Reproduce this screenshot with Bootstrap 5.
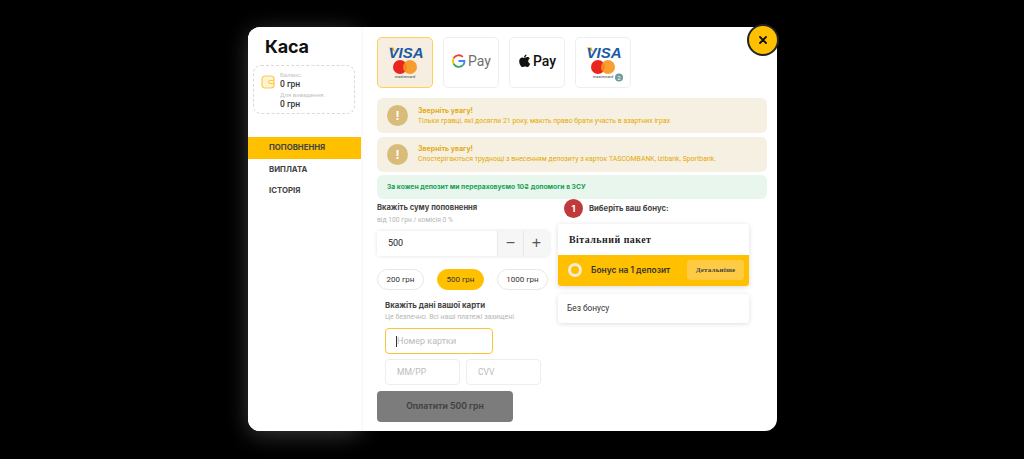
<!DOCTYPE html>
<html lang="en">
  <head>
    <meta charset="utf-8" />
    <meta name="viewport" content="width=device-width, initial-scale=1" />
    <title>Каса</title>
    <link href="https://cdn.jsdelivr.net/npm/bootstrap@5.3.3/dist/css/bootstrap.min.css" rel="stylesheet" />
    <style>
      body { background: #000; font-family: Roboto, "Liberation Sans", sans-serif; height: 459px; overflow: hidden; }
      .cash-modal { width: 529px; height: 404px; margin: 27px 0 0 248px; background: #fff; border-radius: 12px; position: relative; }
      .cash-side { width: 113px; flex: none; box-shadow: 0 4px 22px rgba(255,255,255,.22); border-radius: 12px; background: #fff; }
      .cash-title { font: 700 18px/20px Inter, sans-serif; color: #111; margin: 10px 0 0 17px; letter-spacing: -.2px; }
      .balance-box { margin: 8px 6px 0 5px; height: 49px; border: 1px dashed #d9d9d9; border-radius: 8px; padding: 5px 0 0 7px; gap: 5px; }
      .balance-lbl { font-size: 6px; line-height: 7px; color: #c4c4c4; }
      .balance-val { font-size: 8.5px; line-height: 12px; color: #333; font-weight: 500; margin-bottom: 1px; }
      .side-menu { margin-top: 23px; }
      .side-item { height: 21.6px; padding-left: 21px; font: 700 7.8px/21px Inter, sans-serif; color: #444; display: block; text-decoration: none; }
      .side-item.active-item { background: #ffc000; }
      .cash-main { padding: 10px 10px 0 16px; min-width: 0; flex: 1; box-shadow: inset 5px 0 5px -5px rgba(0,0,0,.06); }
      .pay-row { gap: 10px; margin-bottom: 10px; }
      .pay-tile { width: 56px; height: 51px; border: 1px solid #eee; border-radius: 5px; background: #fff; }
      .pay-tile.picked { background: #f6efe1; border-color: #ffcf57; }
      .note-box { height: 35px; background: #f6f0e3; border-radius: 6px; margin-top: 3.7px; padding-left: 10px; gap: 10px; }
      .note-round { width: 21px; height: 21px; border-radius: 50%; background: #d9bb7a; color: #fff; font: 700 12px/21px Inter, sans-serif; text-align: center; }
      .note-head { font: 700 7px/11px Inter, sans-serif; color: #e5a90f; }
      .note-text { font-size: 6.9px; line-height: 11px; color: #e6a800; }
      .green-box { height: 23.3px; background: #e8f6ee; border-radius: 6px; margin-top: 3.7px; padding-left: 10px; font: 700 6.75px/23px Inter, sans-serif; color: #16a155; }
      .col-left { width: 172px; flex: none; }
      .col-right { width: 191px; flex: none; margin-left: 9px; }
      .sum-title { font: 700 7.6px/12px Inter, sans-serif; color: #444; margin-top: 3px; }
      .sum-hint { font-size: 6.75px; line-height: 10px; color: #b5b5b5; margin-top: 1px; }
      .sum-group { height: 25px; margin-top: 6px; border-radius: 4px; box-shadow: 0 0 4px rgba(0,0,0,.12); }
      .sum-value { flex: 1; font-size: 9px; line-height: 25px; padding-left: 11px; color: #222; background: #fff; }
      .sum-step { width: 26px; background: #f6f6f6; border-left: 1px solid #e8e8e8; color: #555; font: 400 16px/24px "Liberation Sans", sans-serif; text-align: center; }
      .chip-btn { width: 47px; height: 21.5px; border: 1px solid #e7e7e7; border-radius: 11px; background: #fff; font-size: 8px; line-height: 19.5px; text-align: center; color: #333; }
      .chip-btn.on { background: #ffc000; border-color: #ffc000; }
      .chip-btn.wide-chip { width: 51px; }
      .chip-row { margin-top: 13px; gap: 13px; }
      .card-form { padding-left: 8px; margin-top: 10px; }
      .card-title { font: 700 7.85px/11px Inter, sans-serif; color: #444; }
      .card-hint { font-size: 6.9px; line-height: 11px; color: #b5b5b5; margin-top: 1px; }
      .field-box { height: 25.5px; border: 1px solid #eee; border-radius: 4px; font-size: 8.5px; line-height: 24px; color: #bbb; padding-left: 11px; background: #fff; }
      .field-box.focused { width: 108px; border-color: #fbc437; margin-top: 5.3px; position: relative; font-size: 9px; }
      .field-box.focused::before { content: ""; position: absolute; left: 10px; top: 7px; width: 1px; height: 11px; background: #333; }
      .field-pair { gap: 6px; margin-top: 5.5px; width: 156px; }
      .pay-go { width: 136px; height: 30.5px; background: #7c7c7c; border-radius: 4px; margin-top: 6.5px; margin-left: -8px; font: 700 8.6px/30px Inter, sans-serif; color: #444; text-align: center; }
      .bonus-num { width: 19px; height: 19px; border-radius: 50%; background: #c0393b; color: #fff; font: 700 9px/19px Inter, sans-serif; text-align: center; margin-left: 6px; }
      .bonus-head { font: 700 7.7px/19px Inter, sans-serif; color: #444; margin-left: 6px; }
      .bonus-pack { margin-top: 6px; border-radius: 3px; box-shadow: 0 1px 5px rgba(0,0,0,.15); overflow: hidden; }
      .bonus-pack-title { height: 31px; font: 700 9.9px/32px "Liberation Serif", serif; padding-left: 11px; color: #222; letter-spacing: .5px; background: #fff; }
      .bonus-line { height: 31.5px; background: #ffc000; padding-left: 10px; }
      .bonus-radio { width: 14px; height: 14px; border-radius: 50%; background: #ffc000; border: 3px solid #f5edd8; }
      .bonus-txt { font: 600 8.4px/32px Inter, sans-serif; color: #333; margin-left: 9px; }
      .bonus-more { width: 57px; height: 20px; background: #ffcb45; border-radius: 3px; font: 700 7px/20px "Liberation Serif", serif; color: #444; text-align: center; margin-left: auto; margin-right: 5px; letter-spacing: .2px; }
      .bonus-none { height: 29px; margin-top: 7.5px; border-radius: 3px; box-shadow: 0 1px 5px rgba(0,0,0,.13); font-size: 8.3px; line-height: 29px; padding-left: 9px; color: #333; background: #fff; }
      .close-round { position: absolute; left: 499px; top: -3px; width: 32px; height: 32px; border-radius: 50%; background: #ffc000; border: 2px solid #222; }
    </style>
  </head>
  <body>
    <div class="cash-modal d-flex">
      <div class="cash-side">
        <div class="cash-title">Каса</div>
        <div class="balance-box d-flex">
          <svg width="14" height="14" viewBox="0 0 14 14" class="mt-1 flex-none"><rect x="1" y="1" width="12" height="12" rx="3" fill="#fff4d0" stroke="#ffc94a" stroke-width="1.2"/><path d="M13 5.500H9a1.500 1.500 0 0 0 0 3h4" fill="none" stroke="#ffc94a"/></svg>
          <div>
            <div class="balance-lbl">Баланс:</div>
            <div class="balance-val">0 грн</div>
            <div class="balance-lbl">Для виведення:</div>
            <div class="balance-val">0 грн</div>
          </div>
        </div>
        <div class="side-menu">
          <a class="side-item active-item" href="#">ПОПОВНЕННЯ</a>
          <a class="side-item" href="#">ВИПЛАТА</a>
          <a class="side-item" href="#">ІСТОРІЯ</a>
        </div>
      </div>
      <div class="cash-main">
        <div class="d-flex pay-row">
          <div class="pay-tile picked">
            <svg width="54" height="49" viewBox="0 0 54 49"><path d="M10.500 9.500h5l1.500 4.500z" fill="#f2a91f"/><text x="28" y="20" text-anchor="middle" font-family="Liberation Sans" font-style="italic" font-weight="700" font-size="15" fill="#1a5aa6">VISA</text><circle cx="22" cy="29" r="7" fill="#e8261f"/><circle cx="32" cy="29" r="7" fill="#f7941d" fill-opacity=".9"/><text x="27" y="39.500" text-anchor="middle" font-family="Roboto" font-size="4" fill="#444">mastercard</text></svg>
          </div>
          <div class="pay-tile">
            <svg width="54" height="49" viewBox="0 0 54 49"><path d="M18.800 18.800a6 6 0 0 0-9.200 1.400" fill="none" stroke="#ea4335" stroke-width="1.800"/><path d="M9.600 20.200a6 6 0 0 0 0 5.600" fill="none" stroke="#fbbc05" stroke-width="1.800"/><path d="M9.600 25.800a6 6 0 0 0 9.400 1.400" fill="none" stroke="#34a853" stroke-width="1.800"/><path d="M19 27.200a6 6 0 0 0 1.500-4.200h-6" fill="none" stroke="#4285f4" stroke-width="1.800"/><text x="24" y="28" font-family="Roboto" font-size="14" fill="#6f6f6f">Pay</text></svg>
          </div>
          <div class="pay-tile">
            <svg width="54" height="49" viewBox="0 0 54 49"><g transform="translate(1 -1)"><path d="M13 21c1.500 0 2-1 3.200-1 1 0 2 .5 2.600 1.400-2.300 1.300-1.900 4.400.4 5.300-.5 1.400-1.600 3.300-2.800 3.300-1 0-1.300-.6-2.400-.6s-1.500.6-2.400.6c-1.700 0-3.400-3.300-3.400-5.800 0-2.600 1.700-3.800 3.100-3.800.7 0 1.500.6 1.700.6zM13 20.500c0-1.500 1.100-2.700 2.500-2.900.1 1.600-1.100 2.900-2.500 2.900z" fill="#111"/></g><text x="23" y="28" font-family="Roboto" font-weight="500" font-size="14" fill="#111">Pay</text></svg>
          </div>
          <div class="pay-tile">
            <svg width="54" height="49" viewBox="0 0 54 49"><path d="M10.500 9.500h5l1.500 4.500z" fill="#f2a91f"/><text x="28" y="20" text-anchor="middle" font-family="Liberation Sans" font-style="italic" font-weight="700" font-size="15" fill="#1a5aa6">VISA</text><circle cx="22" cy="29" r="7" fill="#e8261f"/><circle cx="32" cy="29" r="7" fill="#f7941d" fill-opacity=".9"/><text x="27" y="39.500" text-anchor="middle" font-family="Roboto" font-size="4" fill="#444">mastercard</text><circle cx="43" cy="39.500" r="4" fill="#6f9a9c"/><text x="43" y="41.500" text-anchor="middle" font-family="Roboto" font-size="6" fill="#fff">2</text></svg>
          </div>
        </div>
        <div class="note-box d-flex align-items-center">
          <div class="note-round">!</div>
          <div>
            <div class="note-head">Зверніть увагу!</div>
            <div class="note-text">Тільки гравці, які досягли 21 року, мають право брати участь в азартних іграх</div>
          </div>
        </div>
        <div class="note-box d-flex align-items-center">
          <div class="note-round">!</div>
          <div>
            <div class="note-head">Зверніть увагу!</div>
            <div class="note-text">Спостерігаються труднощі з внесенням депозиту з карток TASCOMBANK, Izibank, Sportbank.</div>
          </div>
        </div>
        <div class="green-box">За кожен депозит ми перераховуємо 10₴ допомоги в ЗСУ</div>
        <div class="d-flex">
          <div class="col-left">
            <div class="sum-title">Вкажіть суму поповнення</div>
            <div class="sum-hint">від 100 грн / комісія 0 %</div>
            <div class="sum-group d-flex">
              <div class="sum-value">500</div>
              <div class="sum-step">−</div>
              <div class="sum-step">+</div>
            </div>
            <div class="chip-row d-flex">
              <div class="chip-btn">200 грн</div>
              <div class="chip-btn on">500 грн</div>
              <div class="chip-btn wide-chip">1000 грн</div>
            </div>
            <div class="card-form">
              <div class="card-title">Вкажіть дані вашої карти</div>
              <div class="card-hint">Це безпечно. Всі наші платежі захищені</div>
              <div class="field-box focused">Номер картки</div>
              <div class="field-pair d-flex">
                <div class="field-box w-50 flex-fill">ММ/РР</div>
                <div class="field-box w-50 flex-fill">CVV</div>
              </div>
              <div class="pay-go">Оплатити 500 грн</div>
            </div>
          </div>
          <div class="col-right">
            <div class="d-flex">
              <div class="bonus-num">1</div>
              <div class="bonus-head">Виберіть ваш бонус:</div>
            </div>
            <div class="bonus-pack">
              <div class="bonus-pack-title">Вітальний пакет</div>
              <div class="bonus-line d-flex align-items-center">
                <div class="bonus-radio"></div>
                <div class="bonus-txt">Бонус на 1 депозит</div>
                <div class="bonus-more">Детальніше</div>
              </div>
            </div>
            <div class="bonus-none">Без бонусу</div>
          </div>
        </div>
      </div>
      <div class="close-round d-flex align-items-center justify-content-center">
        <svg width="10" height="10" viewBox="0 0 10 10"><path d="M2 2l6 6M8 2l-6 6" stroke="#111" stroke-width="1.800" stroke-linecap="round"/></svg>
      </div>
    </div>
    <script src="https://cdn.jsdelivr.net/npm/bootstrap@5.3.3/dist/js/bootstrap.bundle.min.js"></script>
  </body>
</html>
